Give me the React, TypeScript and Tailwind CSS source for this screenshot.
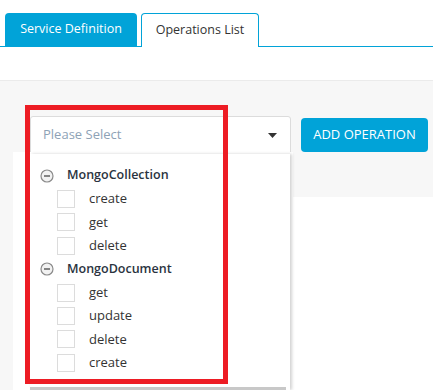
import React from "react";

const Minus = () => (
  <svg width="14" height="14" viewBox="0 0 14 14" className="shrink-0">
    <circle cx="7" cy="7" r="6" fill="#f2f2f2" stroke="#8a8a8a" strokeWidth="1.2" />
    <line x1="4" y1="7" x2="10" y2="7" stroke="#555" strokeWidth="1.4" />
  </svg>
);

const Item = ({ label }: { label: string }) => (
  <div className="flex items-center h-[23.4px] pl-[27px]">
    <div className="w-[18px] h-[18px] border border-[#dcdcdc] bg-white shrink-0" />
    <span className="ml-[14px] text-[13px] text-[#333]">{label}</span>
  </div>
);

const Group = ({ label }: { label: string }) => (
  <div className="flex items-center h-[23.4px] pl-[10px]">
    <Minus />
    <span className="ml-[13px] text-[12.5px] font-semibold text-[#2a3340]">{label}</span>
  </div>
);

export default function App() {
  return (
    <div
      className="w-[433px] h-[390px] overflow-hidden bg-white relative"
      style={{ fontFamily: '"Open Sans", sans-serif' }}
    >
      <div className="h-[80px] bg-white">
        <div className="pt-[13px] flex items-end border-b border-[#01a3d8] h-[47px] pl-[5px]">
          <div className="h-[33px] w-[132px] bg-[#01a3d8] rounded-t-[4px] flex items-center justify-center text-[12.5px] text-white">
            Service Definition
          </div>
          <div className="ml-[4px] h-[34px] w-[118px] bg-white border border-b-0 border-[#01a3d8] rounded-t-[4px] -mb-px flex items-center justify-center text-[12.5px] text-[#333]">
            Operations List
          </div>
        </div>
      </div>
      <div className="h-[310px] bg-[#f7f7f7] border-t border-[#ebebeb] flex flex-col">
        <div className="flex items-center pt-[35px] pl-[30px]">
          <div className="w-[261px] h-[38px] bg-white border border-[#dcdcdc] rounded-t-[3px] flex items-center justify-between pl-[12px] pr-[13px]">
            <span className="text-[13px] text-[#8ea2b6]">Please Select</span>
            <svg width="9" height="5" viewBox="0 0 9 5">
              <path d="M0 0 L9 0 L4.5 5 Z" fill="#333" />
            </svg>
          </div>
          <div className="ml-[10px] w-[127px] h-[34px] bg-[#01a3d8] rounded-[4px] flex items-center justify-center text-[13px] text-white">
            ADD OPERATION
          </div>
        </div>
        <div className="flex flex-1 ml-[13px] mt-[-2px]">
          <div className="w-[280px] bg-white" />
          <div className="flex-1 flex flex-col">
            <div className="h-[45px]" />
            <div className="flex-1 bg-white" />
          </div>
        </div>
      </div>

      <div className="absolute left-[30px] top-[154px] w-[260px] h-[236px] bg-white shadow-[2px_0_3px_rgba(0,0,0,0.18)] pt-[10px]">
        <Group label="MongoCollection" />
        <Item label="create" />
        <Item label="get" />
        <Item label="delete" />
        <Group label="MongoDocument" />
        <Item label="get" />
        <Item label="update" />
        <Item label="delete" />
        <Item label="create" />
        <div className="absolute left-0 top-[233px] w-[256px] h-[3px] bg-[#c8c8c8]" />
      </div>

      <div className="absolute left-[25px] top-[105px] w-[203px] h-[279px] border-[5px] border-[#ed1c24]" />
    </div>
  );
}
